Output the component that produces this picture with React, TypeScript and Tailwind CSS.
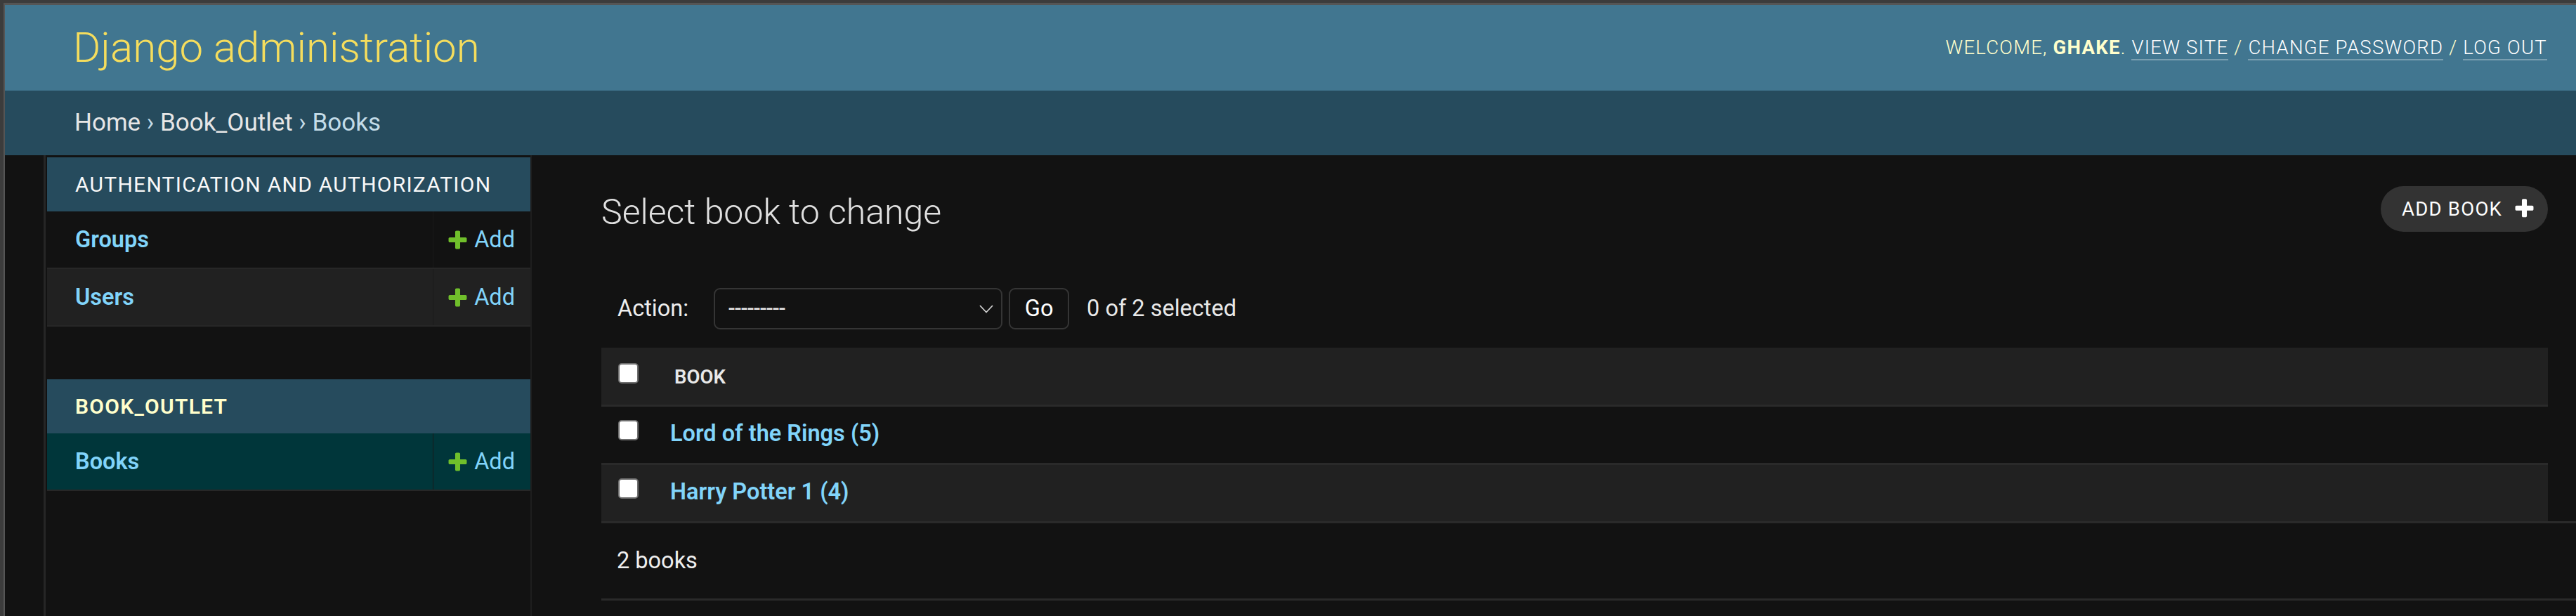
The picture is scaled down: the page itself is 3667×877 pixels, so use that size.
// Django admin change list (dark theme), captured at ~2.5x zoom

const PLUS_PATH =
  "M1600 796v192q0 40-28 68t-68 28h-416v416q0 40-28 68t-68 28h-192q-40 0-68-28t-28-68v-416h-416q-40 0-68-28t-28-68v-192q0-40 28-68t68-28h416v-416q0-40 28-68t68-28h192q40 0 68 28t28 68v416h416q40 0 68 28t28 68z";

const TOOL_PLUS_PATH =
  "M1600 736v192q0 40-28 68t-68 28h-416v416q0 40-28 68t-68 28h-192q-40 0-68-28t-28-68v-416h-416q-40 0-68-28t-28-68v-192q0-40 28-68t68-28h416v-416q0-40 28-68t68-28h192q40 0 68 28t28 68v416h416q40 0 68 28t28 68z";

// ── Header ────────────────────────────────────────────────────

function Header() {
  return (
    <div className="h-[122px] shrink-0 bg-[#417690] flex items-center justify-between pl-[97px] pr-[41px]">
      <div className="text-[60px] font-light leading-none text-[#f5dd5d]">Django administration</div>
      <div className="text-[27.5px] font-light uppercase tracking-[1.25px] text-[#ffffcc] whitespace-pre">
        <span>Welcome, </span>
        <strong className="font-bold">ghake</strong>
        <span>. </span>
        <span className="text-white border-b-2 border-white/30">View site</span>
        <span> / </span>
        <span className="text-white border-b-2 border-white/30">Change password</span>
        <span> / </span>
        <span className="text-white border-b-2 border-white/30">Log out</span>
      </div>
    </div>
  );
}

function Breadcrumbs() {
  return (
    <div className="h-[92px] shrink-0 bg-[#264b5d] flex items-center pl-[99px] text-[35px] text-[#c4dce8] whitespace-pre">
      <span className="text-[#e6e6e6]">Home</span>
      <span> › </span>
      <span className="text-[#e6e6e6]">Book_Outlet</span>
      <span> › Books</span>
    </div>
  );
}

// ── Sidebar ───────────────────────────────────────────────────

function AddLink() {
  return (
    <div className="flex items-center">
      <svg width="33" height="33" viewBox="0 0 1792 1792">
        <path fill="#70bf2b" d={PLUS_PATH} />
      </svg>
      <span className="ml-[7px] text-[32.5px] text-[#81d4fa]">Add</span>
    </div>
  );
}

function SidebarRow({ name, shade }: { name: string; shade: string }) {
  return (
    <div className={`flex h-[82px] border-b-2 border-[#272727] ${shade}`}>
      <div className="flex-1 flex items-center pl-[40px] text-[32.5px] font-semibold text-[#81d4fa]">{name}</div>
      <div className="w-[139px] flex items-center justify-end pr-[22px] border-l border-[#191919]">
        <AddLink />
      </div>
    </div>
  );
}

function Sidebar() {
  return (
    <div className="w-[692px] shrink-0 pl-[2px] pt-[3px] border-r-2 border-[#1e1e1e]">
      <div className="mb-[75px]">
        <div className="h-[77px] bg-[#264b5d] flex items-center pl-[40px] text-[30px] uppercase tracking-[1.25px] text-[#f8f8f8]">
          Authentication and Authorization
        </div>
        <SidebarRow name="Groups" shade="bg-[#121212]" />
        <SidebarRow name="Users" shade="bg-[#212121]" />
      </div>
      <div>
        <div className="h-[77px] bg-[#264b5d] flex items-center pl-[40px] text-[30px] font-semibold uppercase tracking-[1.25px] text-[#ffffcc]">
          Book_Outlet
        </div>
        <SidebarRow name="Books" shade="bg-[#00363a]" />
      </div>
    </div>
  );
}

// ── Change list ───────────────────────────────────────────────

function Checkbox() {
  return (
    <input
      type="checkbox"
      className="appearance-none block w-[29px] h-[29px] bg-white border-2 border-[#6f6f6f] rounded-[5px]"
    />
  );
}

const books = ["Lord of the Rings (5)", "Harry Potter 1 (4)"];

function Main() {
  return (
    <div className="flex-1 min-w-0 pl-[99px] pr-[40px] pt-[44px]">
      <div className="flex justify-between items-start">
        <h1 className="mt-[7px] text-[50px] font-light leading-[60px] text-[#e0e0e0]">Select book to change</h1>
        <div className="h-[65px] w-[238px] rounded-full bg-[#333333] flex items-center justify-between pl-[30px] pr-[17px]">
          <span className="text-[27.5px] uppercase tracking-[1.25px] text-white">Add book</span>
          <svg width="33" height="33" viewBox="0 0 1792 1792">
            <path fill="#ffffff" d={TOOL_PLUS_PATH} />
          </svg>
        </div>
      </div>

      <div className="mt-[78px] h-[59px] flex items-center pl-[23px] text-[32.5px]">
        <span className="text-[#eeeeee]">Action:</span>
        <div className="ml-[36px] w-[411px] h-[59px] rounded-[9px] border-2 border-[#353535] flex items-center justify-between pl-[19px] pr-[11px]">
          <span className="text-[#eeeeee]">---------</span>
          <svg width="20" height="12" viewBox="0 0 20 12">
            <polyline points="1,1 10,10.5 19,1" fill="none" stroke="#d0d0d0" strokeWidth="1.8" />
          </svg>
        </div>
        <div className="ml-[9px] w-[86px] h-[59px] rounded-[9px] border-2 border-[#353535] flex items-center justify-center text-white">
          Go
        </div>
        <span className="ml-[25px] text-[#e8e8e8]">0 of 2 selected</span>
      </div>

      <div className="mt-[26px]">
        <div className="flex items-start h-[84px] bg-[#212121] border-b-[3px] border-[#2a2a2a]">
          <div className="w-[98px] pl-[24px] pt-[22px]">
            <Checkbox />
          </div>
          <div className="pt-[26px] pl-[6px] text-[27.5px] leading-[32px] font-semibold uppercase text-[#e8e8e8]">Book</div>
        </div>
        {books.map((b, i) => (
          <div
            key={b}
            className={`flex items-start ${i === 0 ? "h-[83px] bg-[#121212] border-b-[3px] border-[#2a2a2a]" : "h-[80px] bg-[#212121]"}`}
          >
            <div className="w-[98px] pl-[24px] pt-[19px]">
              <Checkbox />
            </div>
            <div className="pt-[19px] text-[32.5px] leading-[38px] font-semibold text-[#81d4fa]">{b}</div>
          </div>
        ))}
      </div>

      <div className="-mr-[40px] h-[113px] border-y-[3px] border-[#2a2a2a] flex items-center pl-[22px] text-[32.5px] text-[#eeeeee]">
        2 books
      </div>
    </div>
  );
}

export default function App() {
  return (
    <div className="w-[3667px] h-[877px] overflow-hidden bg-[#3c3c3c] pt-[4px] pl-[5px] font-['Roboto',sans-serif]">
      <div className="h-full flex flex-col bg-[#121212] border-t-[3px] border-l-[2px] border-[#555555]">
        <Header />
        <Breadcrumbs />
        <div className="flex flex-1 min-h-0">
          <div className="w-[58px] shrink-0 border-r-[3px] border-[#262626]" />
          <Sidebar />
          <Main />
        </div>
      </div>
    </div>
  );
}
